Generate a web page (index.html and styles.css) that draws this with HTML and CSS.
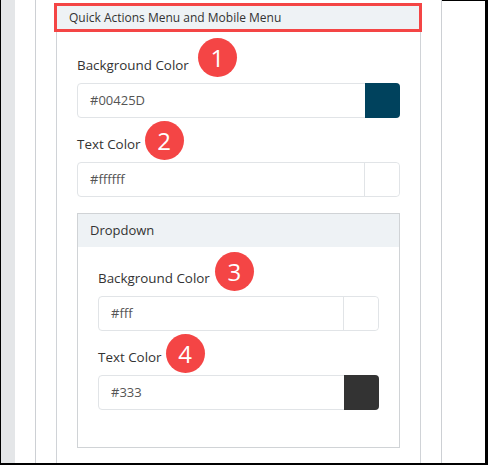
FILE: index.html
```html
<!DOCTYPE html>
<html lang="en">
<head>
    <meta charset="UTF-8">
    <meta name="viewport" content="width=device-width, initial-scale=1.0">
    <title>Quick Actions Menu and Mobile Menu</title>
    <link rel="stylesheet" href="styles.css">
</head>
<body>
    <div class="frame">
        <div class="gutter"></div>
        <div class="shell">
            <div class="card">
                <div class="card-header">Quick Actions Menu and Mobile Menu</div>
                <div class="card-body">
                    <div class="field">
                        <label class="field-label">Background Color<span class="badge badge-1">1</span></label>
                        <div class="color-input">
                            <span class="color-value">#00425D</span>
                            <span class="swatch swatch-dark" style="background-color: #00425D;"></span>
                        </div>
                    </div>

                    <div class="field">
                        <label class="field-label">Text Color<span class="badge badge-2">2</span></label>
                        <div class="color-input">
                            <span class="color-value">#ffffff</span>
                            <span class="swatch" style="background-color: #ffffff;"></span>
                        </div>
                    </div>

                    <div class="subpanel">
                        <div class="subpanel-header">Dropdown</div>
                        <div class="subpanel-body">
                            <div class="field">
                                <label class="field-label">Background Color<span class="badge badge-3">3</span></label>
                                <div class="color-input">
                                    <span class="color-value">#fff</span>
                                    <span class="swatch" style="background-color: #fff;"></span>
                                </div>
                            </div>

                            <div class="field">
                                <label class="field-label">Text Color<span class="badge badge-4">4</span></label>
                                <div class="color-input">
                                    <span class="color-value">#333</span>
                                    <span class="swatch swatch-dark" style="background-color: #333;"></span>
                                </div>
                            </div>
                        </div>
                    </div>
                </div>
            </div>
        </div>
        <div class="side"></div>
    </div>
</body>
</html>
```

FILE: styles.css
```css
* {
    box-sizing: border-box;
}

body {
    margin: 0;
    font-family: "Open Sans", "Noto Sans", sans-serif;
    font-size: 13px;
    color: #333;
    background-color: #fff;
}

.frame {
    display: flex;
    width: 488px;
    height: 465px;
    overflow: hidden;
    border-left: 1px solid #000;
    border-right: 3px solid #000;
    border-bottom: 2px solid #000;
}

.gutter {
    width: 14px;
    background-color: #e4e6e8;
}

.shell {
    margin-left: 20px;
    padding: 0 20px;
    border-left: 1px solid #cdd0d4;
    border-right: 1px solid #cdd0d4;
}

.card {
    width: 365px;
    height: 470px;
    margin-top: 5px;
    border: 1px solid #d0d3d7;
}

.card-header {
    height: 23px;
    margin-right: 1px;
    padding: 0 12px;
    font-size: 12px;
    line-height: 23px;
    background-color: #eef2f5;
    outline: 3px solid #f44545;
}

.card-body {
    padding: 26px 20px 0;
}

.field {
    margin-bottom: 16px;
}

.field-label {
    position: relative;
    display: inline-block;
    margin-bottom: 7px;
    font-size: 13.4px;
    line-height: 21px;
}

.color-input {
    display: flex;
    height: 35px;
    border: 1px solid #e1e4e7;
    border-radius: 4px;
}

.color-value {
    flex: 1;
    padding: 0 12px;
    line-height: 33px;
    color: #555;
}

.swatch {
    width: 35px;
    border-left: 1px solid #e1e4e7;
    border-radius: 0 4px 4px 0;
}

.swatch-dark {
    margin: -1px -1px -1px 0;
    border-left: none;
}

.badge {
    position: absolute;
    top: -15px;
    left: calc(100% + 5px);
    width: 39px;
    height: 39px;
    border-radius: 50%;
    background-color: #f44545;
    color: #fff;
    font-size: 24px;
    line-height: 39px;
    text-align: center;
}

.badge-1 {
    top: -17px;
    left: calc(100% + 9px);
}

.badge-2 {
    top: -13px;
    left: calc(100% + 4px);
}

.badge-3 {
    top: -16px;
}

.badge-4 {
    top: -13px;
    left: calc(100% + 4px);
}

.subpanel {
    border: 1px solid #d0d3d6;
}

.subpanel-header {
    padding: 6px 12px;
    line-height: 21px;
    background-color: #eef2f5;
}

.subpanel-body {
    padding: 21px 20px 21px;
}

.side {
    flex: 1;
    border-top: 1px solid #000;
}
```
